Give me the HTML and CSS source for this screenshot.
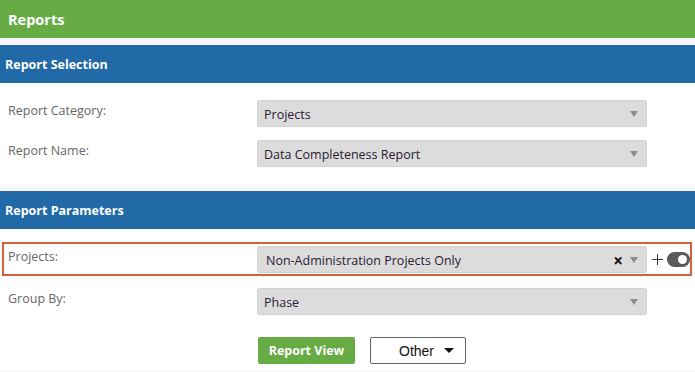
FILE: index.html
```html
<!DOCTYPE html>
<html lang="en">

<head>
    <meta charset="UTF-8">
    <meta name="viewport" content="width=device-width, initial-scale=1.0">
    <title>Reports</title>
    <link rel="stylesheet" href="styles.css">
</head>

<body>
    <div class="page-title">Reports</div>

    <!-- Report selection -->
    <div class="section">
        <div class="section-title">Report Selection</div>
        <div class="section-body selection-body">
            <div class="form-row">
                <label class="field-label">Report Category:</label>
                <div class="select-box"><span>Projects</span><span class="arrow"></span></div>
            </div>
            <div class="form-row second">
                <label class="field-label">Report Name:</label>
                <div class="select-box"><span>Data Completeness Report</span><span class="arrow"></span></div>
            </div>
        </div>
    </div>

    <!-- Report parameters -->
    <div class="section">
        <div class="section-title">Report Parameters</div>
        <div class="section-body params-body">
            <div class="form-row highlight">
                <label class="field-label">Projects:</label>
                <div class="select-box wide-text">
                    <span>Non-Administration Projects Only</span>
                    <span class="clear">&times;</span>
                    <span class="arrow"></span>
                </div>
                <div class="row-tools">
                    <span class="plus"></span>
                    <span class="toggle"><span class="knob"></span></span>
                </div>
            </div>
            <div class="form-row group-row">
                <label class="field-label">Group By:</label>
                <div class="select-box"><span>Phase</span><span class="arrow"></span></div>
            </div>
            <div class="actions">
                <button class="btn-report">Report View</button>
                <button class="btn-other">Other <span class="caret"></span></button>
            </div>
        </div>
    </div>
</body>

</html>
```

FILE: styles.css
```css
body {
    margin: 0;
    font-family: 'Open Sans', sans-serif;
    font-size: 12.5px;
    background: #f7f8f9;
    color: #222;
}

.page-title {
    height: 37px;
    line-height: 37px;
    padding: 1px 0 0 8px;
    background-color: #67ab45;
    color: #fff;
    font-size: 14.5px;
    font-weight: 700;
}

.section {
    margin-top: 7px;
    background: #fff;
}

.section-title {
    height: 36px;
    line-height: 36px;
    padding: 2px 0 0 5px;
    background-color: #2169a7;
    color: #fff;
    font-size: 12.5px;
    font-weight: 700;
}

.selection-body {
    padding: 17px 0;
}

.params-body {
    padding: 13px 0 6px;
}

.form-row {
    display: grid;
    grid-template-columns: 257px 390px auto;
    align-items: start;
}

.form-row.second {
    margin-top: 13px;
}

.field-label {
    padding: 2px 0 0 8px;
    line-height: 18px;
    color: #666;
}

.select-box {
    height: 27px;
    box-sizing: border-box;
    display: flex;
    align-items: center;
    padding: 1px 8px 0 6px;
    background-color: #dcdcdc;
    border: 1px solid #d2d2d2;
    border-radius: 2px;
    color: #2a1a33;
}

.select-box span:first-child {
    flex-grow: 1;
}

.arrow {
    width: 0;
    height: 0;
    border-left: 4px solid transparent;
    border-right: 4px solid transparent;
    border-top: 6px solid #8c8c8c;
}

/* highlighted parameter row */
.form-row.highlight {
    margin: 0 3px 0 2px;
    height: 34px;
    box-sizing: border-box;
    border: 2px solid #d8613c;
    grid-template-columns: 253px 390px auto;
    padding-top: 2px;
}

.highlight .field-label {
    padding: 2px 0 0 4px;
}

.wide-text {
    padding-left: 8px;
}

.clear {
    font-size: 17px;
    line-height: 17px;
    font-weight: 700;
    color: #111;
    margin-right: 7px;
}

.row-tools {
    display: flex;
    align-items: center;
    height: 27px;
    padding-left: 5px;
    overflow: hidden;
}

.plus {
    position: relative;
    width: 11px;
    height: 11px;
    margin-right: 5px;
}

.plus::before,
.plus::after {
    content: "";
    position: absolute;
    background: #333;
}

.plus::before {
    left: 0;
    top: 5px;
    width: 11px;
    height: 1px;
}

.plus::after {
    left: 5px;
    top: 0;
    width: 1px;
    height: 11px;
}

.toggle {
    display: flex;
    align-items: center;
    justify-content: flex-end;
    width: 24px;
    height: 15px;
    padding: 0 3px;
    box-sizing: border-box;
    border-radius: 8px;
    background-color: #5b5b5b;
}

.knob {
    width: 9px;
    height: 9px;
    border-radius: 50%;
    background: #fff;
}

.group-row {
    margin-top: 12px;
}

.actions {
    display: flex;
    gap: 15px;
    margin-top: 22px;
    padding-left: 258px;
}

.btn-report {
    width: 97px;
    height: 27px;
    border: none;
    border-radius: 2px;
    background-color: #67ab45;
    color: #fff;
    font-family: 'Open Sans', sans-serif;
    font-size: 12.5px;
    font-weight: 700;
}

.btn-other {
    display: flex;
    align-items: center;
    justify-content: space-between;
    width: 96px;
    height: 27px;
    padding: 0 11px 0 28px;
    border: 1px solid #666;
    border-radius: 2px;
    background: #fff;
    color: #111;
    font-family: 'Liberation Sans', Arial, sans-serif;
    font-size: 14px;
}

.caret {
    width: 0;
    height: 0;
    border-left: 5px solid transparent;
    border-right: 5px solid transparent;
    border-top: 5px solid #111;
}
```
